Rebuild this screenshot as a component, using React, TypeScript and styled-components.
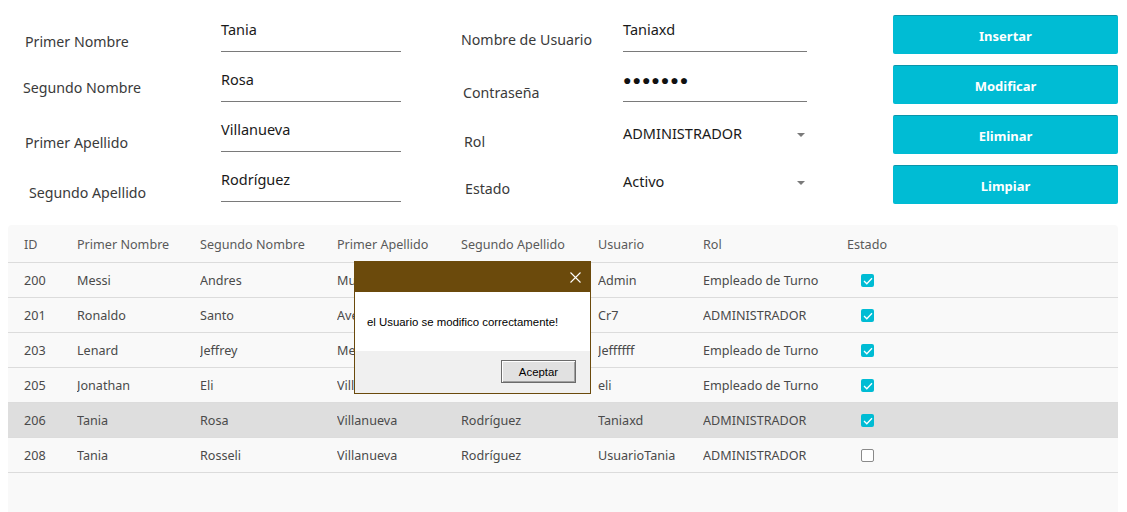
import React from "react";
import styled, { createGlobalStyle } from "styled-components";

const Global = createGlobalStyle`
  html, body { margin: 0; padding: 0; background: #ffffff; overflow: hidden; }
  body { font-family: "Noto Sans", "Open Sans", sans-serif; }
`;

const Page = styled.div`
  width: 1127px;
  height: 512px;
  padding: 15px 0 0 8px;
  box-sizing: border-box;
  display: flex;
  flex-direction: column;
  gap: 10px;
`;

const Form = styled.div`
  display: grid;
  grid-template-columns: 213px 180px 222px 184px 86px 225px;
  grid-auto-rows: 50px;
`;

const Label = styled.div<{ $indent: number; $top: number }>`
  padding-left: ${(p) => p.$indent}px;
  padding-top: ${(p) => p.$top}px;
  font-size: 14.2px;
  line-height: 20px;
  color: #3a3a3a;
  white-space: nowrap;
`;

const Field = styled.div`
  height: 37px;
  box-sizing: border-box;
  padding-top: 4px;
  border-bottom: 1px solid #7a7a7a;
  font-size: 14.5px;
  line-height: 20px;
  color: #1a1a1a;
`;

const Dots = styled.span`
  font-size: 14px;
  letter-spacing: 1px;
  color: #111;
`;

const Select = styled.div<{ $top: number }>`
  display: flex;
  align-items: center;
  justify-content: space-between;
  padding-top: ${(p) => p.$top}px;
  height: 20px;
  font-size: 14.5px;
  line-height: 20px;
  color: #1a1a1a;
`;

const Caret = styled.span`
  width: 0;
  height: 0;
  margin-right: 2px;
  margin-top: 4px;
  border-left: 4px solid transparent;
  border-right: 4px solid transparent;
  border-top: 4px solid #7a7a7a;
`;

const ActionButton = styled.button`
  width: 225px;
  height: 39px;
  border: none;
  border-top: 1px solid #0a95aa;
  border-radius: 2px;
  background: #00bcd4;
  color: #ffffff;
  font-family: "Noto Sans", sans-serif;
  font-weight: 700;
  font-size: 13px;
  padding: 2px 0 0;
`;

const Spacer = styled.div``;

const TableWrap = styled.div`
  position: relative;
  width: 1110px;
  flex: 1;
  background: #f9f9f9;
  border-radius: 4px 4px 0 0;
  font-size: 12.6px;
`;

const cols = "53px 123px 137px 124px 137px 105px 144px 1fr";

const HeadRow = styled.div`
  display: grid;
  grid-template-columns: ${cols};
  padding-left: 16px;
  height: 38px;
  align-items: center;
  border-bottom: 1px solid #dcdcdc;
  color: #5a5a5a;
  box-sizing: border-box;
  padding-top: 1px;
`;

const Row = styled.div<{ $selected?: boolean }>`
  display: grid;
  grid-template-columns: ${cols};
  padding-left: 16px;
  height: 35px;
  box-sizing: border-box;
  align-items: center;
  border-bottom: 1px solid #dcdcdc;
  background: ${(p) => (p.$selected ? "#dedede" : "transparent")};
  color: #4a4a4a;
  padding-top: 1px;
`;

const Cell = styled.div`
  white-space: nowrap;
  overflow: hidden;
`;

const CheckCell = styled.div`
  padding-left: 14px;
  display: flex;
  align-items: center;
`;

const Box = styled.span<{ $on: boolean }>`
  width: 13px;
  height: 13px;
  box-sizing: border-box;
  border-radius: 2px;
  display: inline-flex;
  align-items: center;
  justify-content: center;
  background: ${(p) => (p.$on ? "#00bcd4" : "#ffffff")};
  border: ${(p) => (p.$on ? "none" : "1.5px solid #8a8a8a")};
`;

const Dialog = styled.div`
  position: absolute;
  left: 346px;
  top: 36px;
  width: 237px;
  height: 133px;
  box-sizing: border-box;
  border: 1px solid #6b4a0c;
  background: #f0f0f0;
  display: flex;
  flex-direction: column;
  font-family: "Liberation Sans", Arial, sans-serif;
  font-size: 11.4px;
`;

const TitleBar = styled.div`
  height: 30px;
  background: #6b4a0c;
  display: flex;
  align-items: center;
  justify-content: flex-end;
  padding-right: 9px;
`;

const Body = styled.div`
  height: 59px;
  background: #ffffff;
  display: flex;
  align-items: center;
  padding-left: 12px;
  color: #000;
  padding-top: 1px;
  box-sizing: border-box;
`;

const Footer = styled.div`
  flex: 1;
  display: flex;
  justify-content: flex-end;
  padding: 9px 14px 0 0;
`;

const OkButton = styled.button`
  width: 75px;
  height: 23px;
  background: #e1e1e1;
  border: 1px solid #6b6b6b;
  box-shadow: inset 1px 1px 0 #fff, inset -1px -1px 0 #a0a0a0;
  font-family: "Liberation Sans", Arial, sans-serif;
  font-size: 11.4px;
  color: #000;
  padding: 0;
`;

const Check = () => (
  <svg width="10" height="8" viewBox="0 0 10 8">
    <path d="M1 4 L3.8 6.8 L9 1.2" stroke="#fff" strokeWidth="1.3" fill="none" />
  </svg>
);

const Close = () => (
  <svg width="11" height="11" viewBox="0 0 11 11">
    <path d="M0.5 0.5 L10.5 10.5 M10.5 0.5 L0.5 10.5" stroke="#fff" strokeWidth="1.1" />
  </svg>
);

const data = [
  ["200", "Messi", "Andres", "Mu", "", "Admin", "Empleado de Turno", true],
  ["201", "Ronaldo", "Santo", "Ave", "", "Cr7", "ADMINISTRADOR", true],
  ["203", "Lenard", "Jeffrey", "Me", "", "Jeffffff", "Empleado de Turno", true],
  ["205", "Jonathan", "Eli", "Vill", "", "eli", "Empleado de Turno", true],
  ["206", "Tania", "Rosa", "Villanueva", "Rodríguez", "Taniaxd", "ADMINISTRADOR", true],
  ["208", "Tania", "Rosseli", "Villanueva", "Rodríguez", "UsuarioTania", "ADMINISTRADOR", false],
] as const;

export default function App() {
  return (
    <>
      <Global />
      <Page>
        <Form>
          <Label $indent={17} $top={17}>Primer Nombre</Label>
          <Field>Tania</Field>
          <Label $indent={60} $top={15}>Nombre de Usuario</Label>
          <Field>Taniaxd</Field>
          <Spacer />
          <ActionButton>Insertar</ActionButton>

          <Label $indent={15} $top={13}>Segundo Nombre</Label>
          <Field>Rosa</Field>
          <Label $indent={62} $top={18}>Contraseña</Label>
          <Field><Dots>●●●●●●●</Dots></Field>
          <Spacer />
          <ActionButton>Modificar</ActionButton>

          <Label $indent={17} $top={18}>Primer Apellido</Label>
          <Field>Villanueva</Field>
          <Label $indent={63} $top={17}>Rol</Label>
          <Select $top={8}>ADMINISTRADOR<Caret /></Select>
          <Spacer />
          <ActionButton>Eliminar</ActionButton>

          <Label $indent={21} $top={18}>Segundo Apellido</Label>
          <Field>Rodríguez</Field>
          <Label $indent={64} $top={14}>Estado</Label>
          <Select $top={6}>Activo<Caret /></Select>
          <Spacer />
          <ActionButton>Limpiar</ActionButton>
        </Form>

        <TableWrap>
          <HeadRow>
            <Cell>ID</Cell>
            <Cell>Primer Nombre</Cell>
            <Cell>Segundo Nombre</Cell>
            <Cell>Primer Apellido</Cell>
            <Cell>Segundo Apellido</Cell>
            <Cell>Usuario</Cell>
            <Cell>Rol</Cell>
            <Cell>Estado</Cell>
          </HeadRow>
          {data.map((r) => (
            <Row key={r[0]} $selected={r[0] === "206"}>
              <Cell>{r[0]}</Cell>
              <Cell>{r[1]}</Cell>
              <Cell>{r[2]}</Cell>
              <Cell>{r[3]}</Cell>
              <Cell>{r[4]}</Cell>
              <Cell>{r[5]}</Cell>
              <Cell>{r[6]}</Cell>
              <CheckCell>
                <Box $on={r[7]}>{r[7] && <Check />}</Box>
              </CheckCell>
            </Row>
          ))}
          <Dialog>
            <TitleBar><Close /></TitleBar>
            <Body>el Usuario se modifico correctamente!</Body>
            <Footer>
              <OkButton>Aceptar</OkButton>
            </Footer>
          </Dialog>
        </TableWrap>
      </Page>
    </>
  );
}
